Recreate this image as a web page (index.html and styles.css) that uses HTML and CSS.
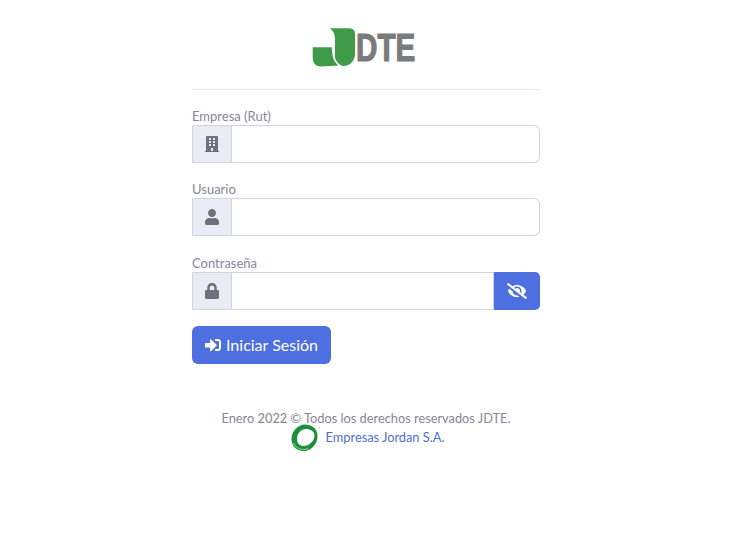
FILE: index.html
```html
<!DOCTYPE html>
<html lang="es">
<head>
<meta charset="utf-8">
<title>JDTE</title>
<link rel="stylesheet" href="styles.css">
</head>
<body>
<main class="wrap">
  <div class="logo">
    <svg class="logo-j" viewBox="0 0 44 40" aria-hidden="true">
      <path fill="#3f9b4a" d="M0.700 19.300H19.700L20.500 27C21 31 23 35 26.500 37.500L9 38.500C4 38.500 0.700 35 0.700 30Z"/>
      <path fill="#3f9b4a" d="M18 0.300H37C41 0.300 43 2.500 43 6V25.500C43 33 38 38 31.500 38C27.500 37.500 23 33 23 28.500V11C23 6 21 3 18 0.300Z"/>
    </svg>
    <span class="logo-text">DTE</span>
  </div>
  <hr class="rule">
  <form class="form">
    <div class="field">
      <label class="label">Empresa (Rut)</label>
      <div class="group">
        <span class="addon"><svg class="ico" viewBox="0 0 448 512"><path d="M436 480h-20V24c0-13.255-10.745-24-24-24H56C42.745 0 32 10.745 32 24v456H12c-6.627 0-12 5.373-12 12v20h448v-20c0-6.627-5.373-12-12-12zM128 76c0-6.627 5.373-12 12-12h40c6.627 0 12 5.373 12 12v40c0 6.627-5.373 12-12 12h-40c-6.627 0-12-5.373-12-12V76zm0 96c0-6.627 5.373-12 12-12h40c6.627 0 12 5.373 12 12v40c0 6.627-5.373 12-12 12h-40c-6.627 0-12-5.373-12-12v-40zm52 148h-40c-6.627 0-12-5.373-12-12v-40c0-6.627 5.373-12 12-12h40c6.627 0 12 5.373 12 12v40c0 6.627-5.373 12-12 12zm76 160h-64v-84c0-6.627 5.373-12 12-12h40c6.627 0 12 5.373 12 12v84zm64-172c0 6.627-5.373 12-12 12h-40c-6.627 0-12-5.373-12-12v-40c0-6.627 5.373-12 12-12h40c6.627 0 12 5.373 12 12v40zm0-96c0 6.627-5.373 12-12 12h-40c-6.627 0-12-5.373-12-12v-40c0-6.627 5.373-12 12-12h40c6.627 0 12 5.373 12 12v40zm0-96c0 6.627-5.373 12-12 12h-40c-6.627 0-12-5.373-12-12V76c0-6.627 5.373-12 12-12h40c6.627 0 12 5.373 12 12v40z"/></svg></span>
        <input class="input input-end" type="text">
      </div>
    </div>
    <div class="field">
      <label class="label">Usuario</label>
      <div class="group">
        <span class="addon"><svg class="ico" viewBox="0 0 448 512"><path d="M224 256c70.700 0 128-57.300 128-128S294.700 0 224 0 96 57.300 96 128s57.300 128 128 128zm89.600 32h-16.700c-22.200 10.200-46.900 16-72.900 16s-50.600-5.800-72.900-16h-16.700C60.200 288 0 348.200 0 422.400V464c0 26.500 21.500 48 48 48h352c26.500 0 48-21.500 48-48v-41.600c0-74.200-60.200-134.400-134.400-134.400z"/></svg></span>
        <input class="input input-end" type="text">
      </div>
    </div>
    <div class="field">
      <label class="label">Contraseña</label>
      <div class="group">
        <span class="addon"><svg class="ico" viewBox="0 0 448 512"><path d="M400 224h-24v-72C376 68.200 307.800 0 224 0S72 68.200 72 152v72H48c-26.500 0-48 21.500-48 48v192c0 26.500 21.500 48 48 48h352c26.500 0 48-21.500 48-48V272c0-26.500-21.500-48-48-48zm-104 0H152v-72c0-39.700 32.300-72 72-72s72 32.300 72 72v72z"/></svg></span>
        <input class="input" type="password">
        <button class="eye" type="button"><svg class="eye-ico" viewBox="0 0 640 512"><path d="M320 400c-75.850 0-137.250-58.710-142.900-133.110L72.200 185.820c-13.790 17.300-26.480 35.590-36.720 55.590a32.350 32.350 0 0 0 0 29.190C89.710 376.410 197.070 448 320 448c26.910 0 52.870-4 77.890-10.460L346 397.390a144.130 144.130 0 0 1-26 2.610zm313.820 58.100l-110.550-85.440a331.250 331.250 0 0 0 81.250-102.070 32.350 32.350 0 0 0 0-29.190C550.290 135.590 442.930 64 320 64a308.150 308.150 0 0 0-147.320 37.700L45.460 3.370A16 16 0 0 0 23 6.180L3.370 31.450A16 16 0 0 0 6.180 53.900l588.360 454.730a16 16 0 0 0 22.460-2.810l19.640-25.270a16 16 0 0 0-2.820-22.450zm-183.720-142l-39.300-30.380A94.750 94.750 0 0 0 416 256a94.760 94.760 0 0 0-121.310-92.210A47.650 47.650 0 0 1 304 192a46.640 46.640 0 0 1-1.540 10l-73.610-56.890A142.310 142.310 0 0 1 320 112a143.920 143.920 0 0 1 144 144c0 21.630-5.290 41.790-13.900 60.110z"/></svg></button>
      </div>
    </div>
    <button class="submit" type="button"><svg class="submit-ico" viewBox="0 0 512 512"><path d="M416 448h-84c-6.600 0-12-5.400-12-12v-40c0-6.600 5.400-12 12-12h84c17.700 0 32-14.300 32-32V160c0-17.700-14.300-32-32-32h-84c-6.600 0-12-5.400-12-12V76c0-6.600 5.400-12 12-12h84c53 0 96 43 96 96v192c0 53-43 96-96 96zm-47-201L201 79c-15-15-41-4.500-41 17v96H24c-13.300 0-24 10.700-24 24v96c0 13.300 10.700 24 24 24h136v96c0 21.500 26 32 41 17l168-168c9.300-9.400 9.300-24.600 0-34z"/></svg><span class="submit-text">Iniciar Sesión</span></button>
  </form>
  <footer class="foot">
    <p class="foot-line">Enero 2022 © Todos los derechos reservados JDTE.</p>
    <div class="foot-link-line">
      <svg class="ring" viewBox="0 0 30 28" aria-hidden="true">
        <path fill="#1c8f3e" fill-rule="evenodd" d="M14 0.500C20 0.500 26 4 26.500 11C27 19 21 27 12.500 27C5 27 0.500 21.500 0.500 15C0.500 7 7 0.500 14 0.500ZM15 5C10 5 6 9.500 6 15C6 19 8.500 22 12.500 22C18 22 23.500 17 23.500 11.500C23.500 7.500 19.500 5 15 5Z"/>
        <path d="M2.500 19C5 25 12 27 17.500 24.500" fill="none" stroke="#62c070" stroke-width="1.500"/>
        <circle cx="28.500" cy="3.500" r="0.700" fill="#9fd6a8"/>
      </svg>
      <a class="link" href="#">Empresas Jordan S.A.</a>
    </div>
  </footer>
</main>
</body>
</html>
```

FILE: styles.css
```css
* { box-sizing: border-box; }
html, body { margin: 0; padding: 0; background: #fff; }
body {
  font-family: Lato, "Noto Sans", sans-serif;
  color: #858796;
  font-size: 13px;
}
.wrap { width: 348px; min-height: 557px; margin-left: 192px; padding-top: 28px; }
.logo { display: flex; justify-content: center; height: 39px; padding-right: 5px; }
.logo-j { width: 44px; height: 40px; display: block; flex: none; }
.logo-text {
  width: 59px;
  padding-top: 1px;
  font-family: "Liberation Sans", sans-serif;
  font-weight: 700;
  font-size: 38px;
  line-height: 38px;
  color: #7b7b7b;
  -webkit-text-stroke: 1.200px #7b7b7b;
  transform: scaleX(.78);
  transform-origin: left top;
  white-space: nowrap;
}
.rule { border: 0; border-top: 1px solid #e8e9ee; margin: 22px 0 0; }
.form { display: flex; flex-direction: column; padding-top: 18px; }
.field { display: flex; flex-direction: column; margin-bottom: 18.400px; }
.field:last-of-type { margin-bottom: 16px; }
.label { line-height: 16px; height: 17px; display: block; }
.group { display: flex; height: 38px; }
.addon {
  width: 40px; flex: none;
  display: flex; align-items: center; justify-content: center;
  background: #eaecf4;
  border: 1px solid #d1d3e2;
  border-radius: 1px 0 0 1px;
}
.ico { width: 14px; height: 16px; fill: #6e707e; display: block; }
.input {
  flex: 1; min-width: 0;
  border: 1px solid #d1d3e2;
  border-left: 0;
  background: #fff;
  padding: 6px 12px;
  outline: none;
}
.input-end { border-radius: 0 6px 6px 0; }
.eye {
  width: 46px; flex: none;
  border: 0; padding: 0;
  background: #4e6fdf;
  border-radius: 0 5px 5px 0;
  display: flex; align-items: center; justify-content: center;
}
.eye-ico { width: 20px; height: 16px; fill: #fff; display: block; }
.submit {
  align-self: flex-start;
  width: 139px; height: 38px;
  border: 0;
  border-radius: 6px;
  background: #4e6fdf;
  color: #fff;
  font-family: inherit;
  font-size: 16px;
  display: flex; align-items: center; justify-content: center;
  gap: 5px;
  padding: 0;
}
.submit-text { display: block; margin-top: -1px; }
.submit-ico { width: 16px; height: 16px; fill: #fff; display: block; }
.foot { text-align: center; margin-top: 45px; }
.foot-line { margin: 0; line-height: 18px; font-size: 12.800px; white-space: nowrap; }
.foot-link-line { display: flex; justify-content: center; align-items: center; gap: 5px; height: 20px; font-size: 12.800px; padding-left: 3px; }
.ring { width: 30px; height: 28px; display: block; flex: none; margin: -3px 0 -5px; }
.link { color: #4e6fcf; text-decoration: none; }
```
